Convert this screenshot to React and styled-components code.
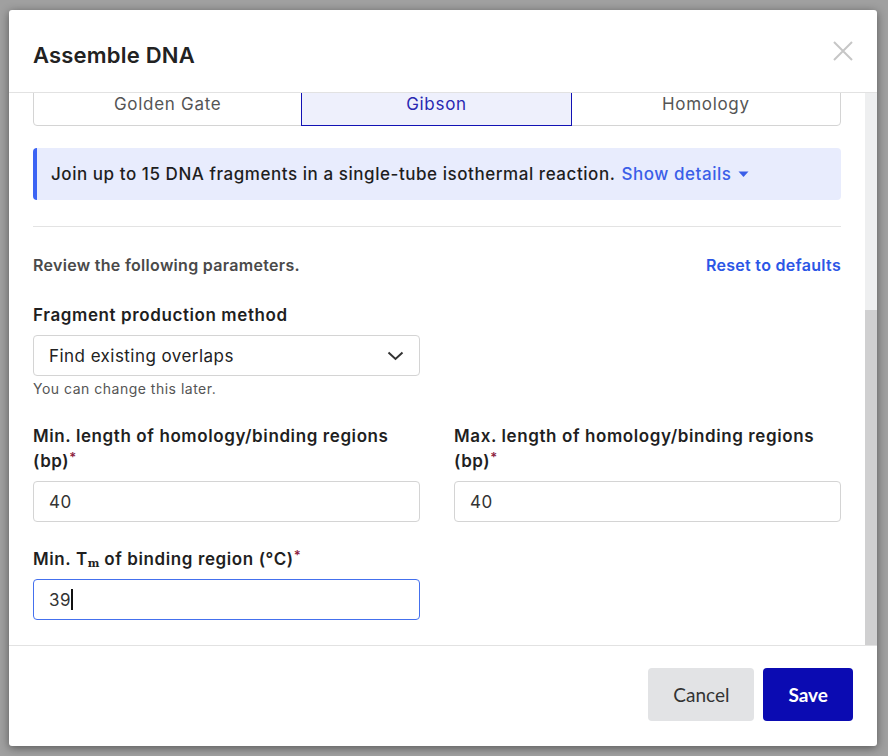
import React, { useLayoutEffect, useRef, useState } from 'react';
import styled, { createGlobalStyle } from 'styled-components';

const GlobalStyle = createGlobalStyle`
  html, body {
    margin: 0;
    padding: 0;
    background: #a0a0a0;
    font-family: Inter, "Open Sans", Arial, sans-serif;
  }
  * { box-sizing: border-box; }
`;

const TABS = ['Golden Gate', 'Gibson', 'Homology'];

const App = () => {
  const bodyRef = useRef(null);
  const [thumb, setThumb] = useState({ top: 0, height: 0 });

  // the dialog is scrolled all the way down in the reference
  useLayoutEffect(() => {
    const update = () => {
      const el = bodyRef.current;
      if (!el) return;
      el.scrollTop = el.scrollHeight;
      const ratio = el.clientHeight / el.scrollHeight;
      setThumb({ top: el.scrollTop * ratio, height: el.clientHeight * ratio });
    };
    update();
    if (document.fonts) document.fonts.ready.then(update);
  }, []);

  return (
    <>
      <GlobalStyle />
      <Backdrop>
        <Dialog>
          <Header>
            <Title>Assemble DNA</Title>
            <CloseButton aria-label="Close">
              <svg width="20" height="20" viewBox="0 0 20 20">
                <path d="M1 1 L19 19 M19 1 L1 19" stroke="#c6c6c6" strokeWidth="2" fill="none" />
              </svg>
            </CloseButton>
          </Header>

          <ScrollArea>
            <Body ref={bodyRef}>
              <FragmentPanel />

              <TabBar>
                {TABS.map(tab => (
                  <Tab key={tab} $active={tab === 'Gibson'}>{tab}</Tab>
                ))}
              </TabBar>

              <Banner>
                Join up to 15 DNA fragments in a single-tube isothermal reaction.
                <BannerLink>
                  Show details
                  <svg width="11" height="7" viewBox="0 0 11 7">
                    <path d="M0.5 0.5 H10.5 L5.5 6 Z" fill="#3a5ee8" />
                  </svg>
                </BannerLink>
              </Banner>

              <Divider />

              <ReviewRow>
                <ReviewText>Review the following parameters.</ReviewText>
                <ResetLink>Reset to defaults</ResetLink>
              </ReviewRow>

              <Field $gap={28}>
                <Label>Fragment production method</Label>
                <Select>
                  <span>Find existing overlaps</span>
                  <svg width="17" height="10" viewBox="0 0 17 10">
                    <path d="M1.5 1.5 L8.5 8 L15.5 1.5" stroke="#333" strokeWidth="2" fill="none" />
                  </svg>
                </Select>
                <Helper>You can change this later.</Helper>
              </Field>

              <TwoCols $gap={26}>
                <Field>
                  <Label>Min. length of homology/binding regions (bp)<Req>*</Req></Label>
                  <Input defaultValue="40" />
                </Field>
                <Field>
                  <Label>Max. length of homology/binding regions (bp)<Req>*</Req></Label>
                  <Input defaultValue="40" />
                </Field>
              </TwoCols>

              <TwoCols $gap={25}>
                <Field>
                  <Label>Min. T<Sub>m</Sub> of binding region (°C)<Req>*</Req></Label>
                  <InputWrap>
                    <Input defaultValue="39" $focused />
                    <Mirror>
                      <Ghost>39</Ghost>
                      <Caret />
                    </Mirror>
                  </InputWrap>
                </Field>
              </TwoCols>
            </Body>
            <ScrollTrack>
              <ScrollThumb style={{ top: thumb.top, height: thumb.height }} />
            </ScrollTrack>
          </ScrollArea>

          <Footer>
            <Button>Cancel</Button>
            <Button $primary>Save</Button>
          </Footer>
        </Dialog>
      </Backdrop>
    </>
  );
};

export default App;

// CSS //
const Backdrop = styled.div`
  width: 888px;
  height: 756px;
  padding: 10px 11px 10px 9px;
`;

const Dialog = styled.div`
  width: 868px;
  height: 736px;
  background: #fff;
  border-radius: 3px;
  box-shadow: 0 2px 10px rgba(0, 0, 0, 0.45);
  display: flex;
  flex-direction: column;
  overflow: hidden;
`;

const Header = styled.div`
  height: 83px;
  flex: none;
  display: flex;
  align-items: center;
  justify-content: space-between;
  padding: 0 24px 0 24px;
  border-bottom: 1px solid #e2e2e2;
`;

const Title = styled.h2`
  margin: 0;
  padding-top: 8px;
  font-size: 22px;
  font-weight: 600;
  letter-spacing: 0.2px;
  color: #222;
`;

const CloseButton = styled.button`
  border: none;
  background: none;
  padding: 0;
  width: 20px;
  height: 20px;
  cursor: pointer;
  display: flex;
`;

const ScrollArea = styled.div`
  flex: 1;
  min-height: 0;
  display: flex;
`;

const Body = styled.div`
  flex: 1;
  overflow-y: scroll;
  scrollbar-width: none;
  padding: 24px 24px 25px 24px;

  &::-webkit-scrollbar {
    display: none;
  }
`;

const ScrollTrack = styled.div`
  flex: none;
  width: 12px;
  background: #eeeff0;
  position: relative;
`;

const ScrollThumb = styled.div`
  position: absolute;
  left: 0;
  right: 0;
  background: #d0d0d1;
`;

const FragmentPanel = styled.div`
  height: 298px;
  margin-bottom: 24px;
  border: 1px solid #d4d4d4;
  border-radius: 4px;
`;

const TabBar = styled.div`
  display: grid;
  grid-template-columns: repeat(3, 1fr);
  height: 44px;
`;

const Tab = styled.button`
  font-family: inherit;
  font-size: 17px;
  letter-spacing: 0.7px;
  color: ${p => (p.$active ? '#2828b2' : '#555')};
  background: ${p => (p.$active ? '#eef0fc' : '#fff')};
  border: 1px solid ${p => (p.$active ? '#1212b4' : '#d4d4d4')};
  margin-left: -1px;
  position: relative;
  z-index: ${p => (p.$active ? 1 : 0)};
  padding: 0;

  &:first-child {
    margin-left: 0;
    border-radius: 4px 0 0 4px;
  }
  &:last-child {
    border-radius: 0 4px 4px 0;
  }
`;

const Banner = styled.div`
  margin-top: 22px;
  height: 52px;
  display: flex;
  align-items: center;
  gap: 6px;
  padding: 0 16px 0 14px;
  background: #e8ecfd;
  border-left: 4px solid #3c64f4;
  border-radius: 4px;
  font-size: 17px;
  font-weight: 500;
  letter-spacing: 0.55px;
  color: #1e1e1e;
  white-space: nowrap;
`;

const BannerLink = styled.span`
  color: #3a5ee8;
  font-weight: 500;
  display: inline-flex;
  align-items: center;
  gap: 6px;
  cursor: pointer;
`;

const Divider = styled.hr`
  margin: 26px 0 0;
  border: none;
  border-top: 1px solid #e3e3e3;
`;

const ReviewRow = styled.div`
  margin-top: 28px;
  display: flex;
  justify-content: space-between;
  align-items: center;
  line-height: 20px;
  font-size: 16px;
  font-weight: 600;
  letter-spacing: 0.3px;
`;

const ReviewText = styled.span`
  color: #4a4a4a;
`;

const ResetLink = styled.span`
  color: #2b56e6;
  cursor: pointer;
`;

const TwoCols = styled.div`
  margin-top: ${p => p.$gap || 26}px;
  display: grid;
  grid-template-columns: 387px 387px;
  column-gap: 34px;
`;

const Field = styled.div`
  margin-top: ${p => p.$gap || 0}px;
  display: flex;
  flex-direction: column;
  width: 387px;
`;

const Label = styled.label`
  font-size: 17px;
  font-weight: 600;
  letter-spacing: 0.6px;
  line-height: 25px;
  color: #1f1f1f;
  margin-bottom: 7px;
`;

const Req = styled.span`
  color: #8c1d40;
  font-size: 13px;
  vertical-align: text-top;
  line-height: 1;
`;

const Sub = styled.sub`
  font-family: "DejaVu Serif", serif;
  font-size: 11px;
  font-weight: 700;
  letter-spacing: 0;
  vertical-align: -2px;
  line-height: 0;
`;

const Select = styled.div`
  height: 41px;
  border: 1px solid #d4d4d4;
  border-radius: 4px;
  display: flex;
  align-items: center;
  justify-content: space-between;
  padding: 0 15px 0 15px;
  font-size: 17px;
  letter-spacing: 0.45px;
  color: #222;
  cursor: pointer;
`;

const Helper = styled.div`
  margin-top: 4px;
  font-size: 14px;
  letter-spacing: 0.5px;
  line-height: 18px;
  color: #555;
`;

const InputWrap = styled.div`
  position: relative;
  display: flex;
`;

const Input = styled.input`
  width: 100%;
  height: 41px;
  border: 1px solid ${p => (p.$focused ? '#4470ee' : '#d4d4d4')};
  border-radius: 4px;
  padding: 0 15px;
  font-family: inherit;
  font-size: 17px;
  letter-spacing: 0.4px;
  color: #333;
  outline: none;
`;

const Mirror = styled.div`
  position: absolute;
  left: 16px;
  top: 0;
  height: 41px;
  display: flex;
  align-items: center;
  font-size: 17px;
  letter-spacing: 0.4px;
  pointer-events: none;
`;

const Ghost = styled.span`
  color: transparent;
`;

const Caret = styled.span`
  width: 2px;
  height: 21px;
  background: #111;
`;

const Footer = styled.div`
  flex: none;
  height: 101px;
  border-top: 1px solid #e2e2e2;
  display: flex;
  justify-content: flex-end;
  align-items: flex-start;
  gap: 9px;
  padding: 22px 24px 0 0;
`;

const Button = styled.button`
  height: 53px;
  padding: 0 25px;
  border: none;
  border-radius: 4px;
  font-family: Lato, Arial, sans-serif;
  font-size: 19px;
  font-weight: ${p => (p.$primary ? 700 : 400)};
  color: ${p => (p.$primary ? '#fff' : '#333')};
  background: ${p => (p.$primary ? '#0b0bb2' : '#e2e3e5')};
  cursor: pointer;
`;
